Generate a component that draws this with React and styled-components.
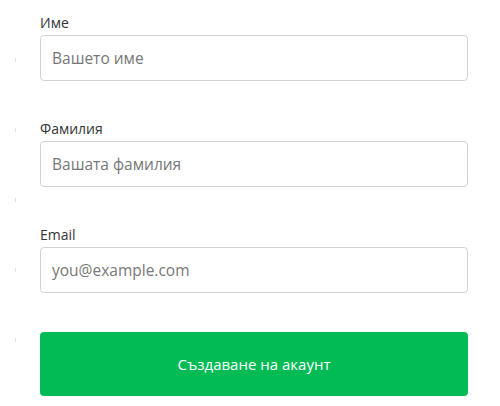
import React from 'react'
import styled, { createGlobalStyle } from 'styled-components'

const GlobalStyle = createGlobalStyle`
    html, body {
        margin: 0;
        padding: 0;
        background: #fff;
    }
    body {
        font-family: "Open Sans", "Noto Sans", sans-serif;
    }
`

const Page = styled.div`
    position: relative;
    width: 500px;
    height: 406px;
    box-sizing: border-box;
    padding: 13px 32px 0 40px;
    background-image: repeating-linear-gradient(
        to bottom,
        transparent 0,
        transparent 18px,
        #e2e2e2 18px,
        #e2e2e2 22px,
        transparent 22px,
        transparent 70px
    );
    background-size: 1px 100%;
    background-position: 15px 40px;
    background-repeat: no-repeat;
`

const Form = styled.form`
    display: flex;
    flex-direction: column;
    gap: 38px;
`

const Field = styled.div`
    display: flex;
    flex-direction: column;
    gap: 2px;
`

const Label = styled.label`
    font-size: 14px;
    line-height: 20px;
    color: #333;
`

const Input = styled.input`
    box-sizing: border-box;
    width: 100%;
    height: 46px;
    padding: 0 11px;
    border: 1px solid #d2d2d2;
    border-radius: 4px;
    font-family: inherit;
    font-size: 15.5px;
    color: #333;
    outline: none;
    &::placeholder {
        color: #777;
    }
`

const SubmitButton = styled.button`
    height: 64px;
    width: 100%;
    margin-top: 1px;
    border: none;
    border-radius: 4px;
    background: #02bb55;
    color: #fff;
    font-family: inherit;
    font-size: 15px;
    cursor: pointer;
`

const fields = [
    { name: 'firstName', label: 'Име', placeholder: 'Вашето име', type: 'text' },
    { name: 'lastName', label: 'Фамилия', placeholder: 'Вашата фамилия', type: 'text' },
    { name: 'email', label: 'Email', placeholder: 'you@example.com', type: 'email' },
]

export default function App() {
    return (
        <>
            <GlobalStyle />
            <Page>
                <Form onSubmit={e => e.preventDefault()}>
                    {fields.map(f => (
                        <Field key={f.name}>
                            <Label htmlFor={f.name}>{f.label}</Label>
                            <Input id={f.name} type={f.type} placeholder={f.placeholder} />
                        </Field>
                    ))}
                    <SubmitButton type="submit">Създаване на акаунт</SubmitButton>
                </Form>
            </Page>
        </>
    )
}
